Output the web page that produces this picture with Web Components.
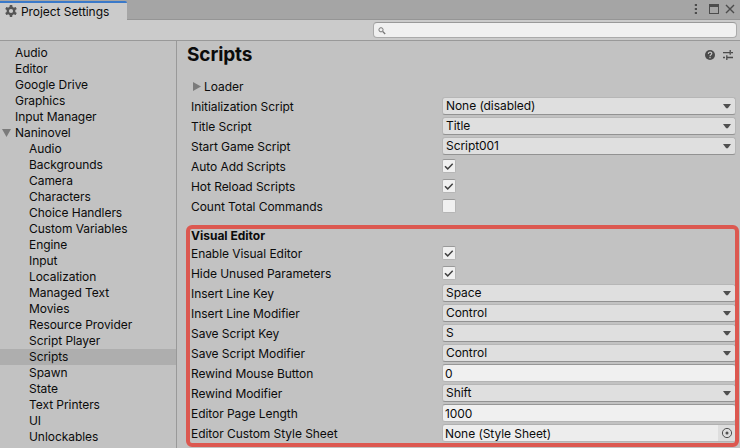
<!DOCTYPE html>
<html lang="en"><head><meta charset="utf-8"><title>Project Settings</title>
<style>html,body{margin:0;width:740px;height:448px;overflow:hidden;background:#c2c2c2}</style></head>
<body><settings-window></settings-window>
<script>
const define = (name, html, init) => customElements.define(name, class extends HTMLElement {
  connectedCallback() {
    if (this.shadowRoot) return;
    const root = this.attachShadow({mode: 'open'});
    const t = document.createElement('template');
    t.innerHTML = html;
    root.append(t.content.cloneNode(true));
    if (init) init(this, root);
  }
});

define('title-bar', `<style>
:host{display:flex;height:20px;box-sizing:border-box;background:#a5a5a5;border-bottom:1px solid #959595;justify-content:space-between}
.tab{display:flex;box-sizing:border-box;width:127px;margin-top:1px;height:19px;border-top:2px solid #3a79c9;background:#cbcbcb;border-radius:0 2px 0 0;padding-left:5px;gap:4px}
.tab svg{margin-top:2px}.tab span{line-height:18px}
.ctl{display:flex;padding-right:4px}
</style><div class="tab"><svg width="12" height="12" viewBox="0 0 12 12"><g fill="#555"><rect x="4.7" y="0" width="2.6" height="12" rx=".4"/><rect x="4.7" y="0" width="2.6" height="12" rx=".4" transform="rotate(60 6 6)"/><rect x="4.7" y="0" width="2.6" height="12" rx=".4" transform="rotate(120 6 6)"/></g><circle cx="6" cy="6" r="3.3" fill="none" stroke="#555" stroke-width="2.2"/><circle cx="6" cy="6" r="2.1" fill="#cbcbcb"/></svg><span><slot></slot></span></div>
<svg class="ctl" width="46" height="19" viewBox="0 0 46 19"><g fill="#4c4c4c"><rect x="4.8" y="4" width="2.2" height="2"/><rect x="4.8" y="8" width="2.2" height="2"/><rect x="4.8" y="12" width="2.2" height="2"/><path d="M19 4h10v10H19zM20 7v6h8V7z" fill-rule="evenodd"/></g><path d="M36 5l8 8M44 5l-8 8" stroke="#4c4c4c" stroke-width="1.4"/></svg>`);

define('search-bar', `<style>
:host{display:flex;justify-content:flex-end;height:21px;box-sizing:border-box;background:#cbcbcb;border-bottom:1px solid #999;padding:2px 3px 0 0}
div{box-sizing:border-box;width:364px;height:16px;border:1px solid #aaa;border-top-color:#999;border-radius:4px;background:#f0f0f0}
svg{display:block;margin:4px 0 0 4px}
</style><div><svg width="8" height="8" viewBox="0 0 8 8" fill="none" stroke="#777"><circle cx="3" cy="2.8" r="2.1"/><path d="M4.7 4.5l2.5 2.5" stroke-width="1.3"/></svg></div>`);

define('nav-item', `<style>
:host{display:flex;align-items:center;height:16px;line-height:16px;padding-left:15px;white-space:nowrap}
:host([sub]){padding-left:29px}:host([selected]){background:#aeaeae}
svg{display:none;margin-left:-13px;margin-right:4px}:host([open]) svg{display:block}
</style><svg width="9" height="8" viewBox="0 0 9 8"><path d="M0 0h9L4.5 8z" fill="#7b7b7b"/></svg><slot></slot>`);

define('check-box', `<style>:host{display:block;margin-top:2px;box-sizing:border-box;width:14px;height:14px;border:1px solid #b5b5b5;border-top-color:#999;border-radius:2px;background:#f0f0f0}
svg{display:none}:host([checked]) svg{display:block}</style><svg width="12" height="12" viewBox="0 0 12 12"><path d="M2 6.3l2.7 2.6 5-5.2" fill="none" stroke="#404040" stroke-width="1.5"/></svg>`);

define('field-box', `<style>
:host{display:flex;box-sizing:border-box;width:294px;height:18px;border:1px solid #b6b6b6;border-bottom-color:#929292;border-radius:3px;background:#dfdfdf;padding-left:3px;line-height:16px;justify-content:space-between;overflow:hidden}
:host([kind=text]),:host([kind=object]){background:#f0f0f0;border-top-color:#979797;border-bottom-color:#b4b4b4;padding-left:2px}
:host([kind=object]){background:#ededed;border-top-color:#b0b0b0}
:host([kind=text]) span,:host([kind=object]) span{padding-top:1px}
.arrow,.pick{display:none}
:host([kind=select]) .arrow{display:block;margin:6px 4px 0 0}
:host([kind=object]) .pick{display:block}
</style><span><slot></slot></span><svg class="arrow" width="8" height="5" viewBox="0 0 8 5"><path d="M0 0h8L4.8 4.2H3.2z" fill="#505050"/></svg>
<svg class="pick" width="17" height="16" viewBox="0 0 17 16"><path d="M0 0h17v16H0z" fill="#dedede"/><circle cx="9" cy="8" r="4.6" fill="none" stroke="#505050"/><circle cx="9" cy="8" r="1.5" fill="#505050"/></svg>`);

define('setting-row', `<style>
:host{display:grid;grid-template-columns:251px 294px;height:20px;align-items:start}
.l{line-height:18px;padding-top:1px;white-space:nowrap}
</style><span class="l"></span><slot></slot>`, (el, root) => root.querySelector('.l').textContent = el.getAttribute('label'));

define('marked-section', `<style>
:host{display:block;position:relative;height:218px;margin-top:11px}
h2{margin:0;font-size:12px;font-weight:700;line-height:16px;height:16px;letter-spacing:0}
.frame{position:absolute;left:-5px;top:-3px;width:553px;height:222px;box-sizing:border-box;border:4px solid #dc5850;border-radius:6px}
</style><h2></h2><slot></slot><div class="frame"></div>`, (el, root) => root.querySelector('h2').textContent = el.getAttribute('heading'));

define('scripts-panel', `<style>
:host{display:block;padding-left:14px}
header{display:flex;justify-content:space-between;height:37px;margin-left:-4px}
h1{margin:0;font-size:19px;line-height:27px;font-weight:700;letter-spacing:-.12px}
header svg{margin:8px 6px 0 0}
.fold{display:flex;align-items:center;gap:3px;height:17px;padding:0 0 2px 2px;line-height:17px}
</style><header><h1>Scripts</h1><svg width="30" height="12" viewBox="0 0 30 12"><circle cx="6" cy="6" r="5" fill="#4b4b4b"/><path d="M4.3 4.9c0-2.5 3.5-2.3 3.5-.3C7.8 5.8 6 5.7 6 7.2M6 8.1v1.2" fill="none" stroke="#c8c8c8" stroke-width="1.2"/><path d="M19 3.7h5M27 3.7h2M26.2 1v4.7M24 3.7h2M19 8.5h2M24 8.5h5M22.8 6.2v4.7M22.8 8.5h2" fill="none" stroke="#4b4b4b" stroke-width="1.3"/></svg></header>
<div class="fold"><svg width="8" height="9" viewBox="0 0 8 9"><path d="M0 0l8 4.5L0 9z" fill="#7b7b7b"/></svg>Loader</div>
<slot></slot>`);

const nav = ['Audio','Editor','Google Drive','Graphics','Input Manager'];
const sub = ['Audio','Backgrounds','Camera','Characters','Choice Handlers','Custom Variables','Engine','Input','Localization','Managed Text','Movies','Resource Provider','Script Player','Scripts','Spawn','State','Text Printers','UI','Unlockables'];
const row = ([label, kind, value]) => `<setting-row label="${label}">${kind === 'check' ? `<check-box ${value ? 'checked' : ''}></check-box>` : `<field-box kind="${kind}">${value}</field-box>`}</setting-row>`;
const general = [['Initialization Script','select','None (disabled)'],['Title Script','select','Title'],['Start Game Script','select','Script001'],['Auto Add Scripts','check',true],['Hot Reload Scripts','check',true],['Count Total Commands','check',false]];
const editor = [['Enable Visual Editor','check',true],['Hide Unused Parameters','check',true],['Insert Line Key','select','Space'],['Insert Line Modifier','select','Control'],['Save Script Key','select','S'],['Save Script Modifier','select','Control'],['Rewind Mouse Button','text','0'],['Rewind Modifier','select','Shift'],['Editor Page Length','text','1000'],['Editor Custom Style Sheet','object','None (Style Sheet)']];

define('settings-window', `<style>
:host{display:flex;flex-direction:column;width:740px;height:448px;background:#c2c2c2;color:#0b0b0b;font:12px Inter,"Liberation Sans",sans-serif;letter-spacing:-.06px}
main{display:grid;grid-template-columns:177px 563px;height:407px}
nav{box-sizing:border-box;border-right:1px solid #999;padding-top:4px}
</style><title-bar>Project Settings</title-bar><search-bar></search-bar><main><nav>${nav.map(n => `<nav-item>${n}</nav-item>`).join('')}<nav-item open>Naninovel</nav-item>${sub.map(n => `<nav-item sub ${n === 'Scripts' ? 'selected' : ''}>${n}</nav-item>`).join('')}</nav>
<scripts-panel>${general.map(row).join('')}<marked-section heading="Visual Editor">${editor.map(row).join('')}</marked-section></scripts-panel></main>`);
</script></body></html>
